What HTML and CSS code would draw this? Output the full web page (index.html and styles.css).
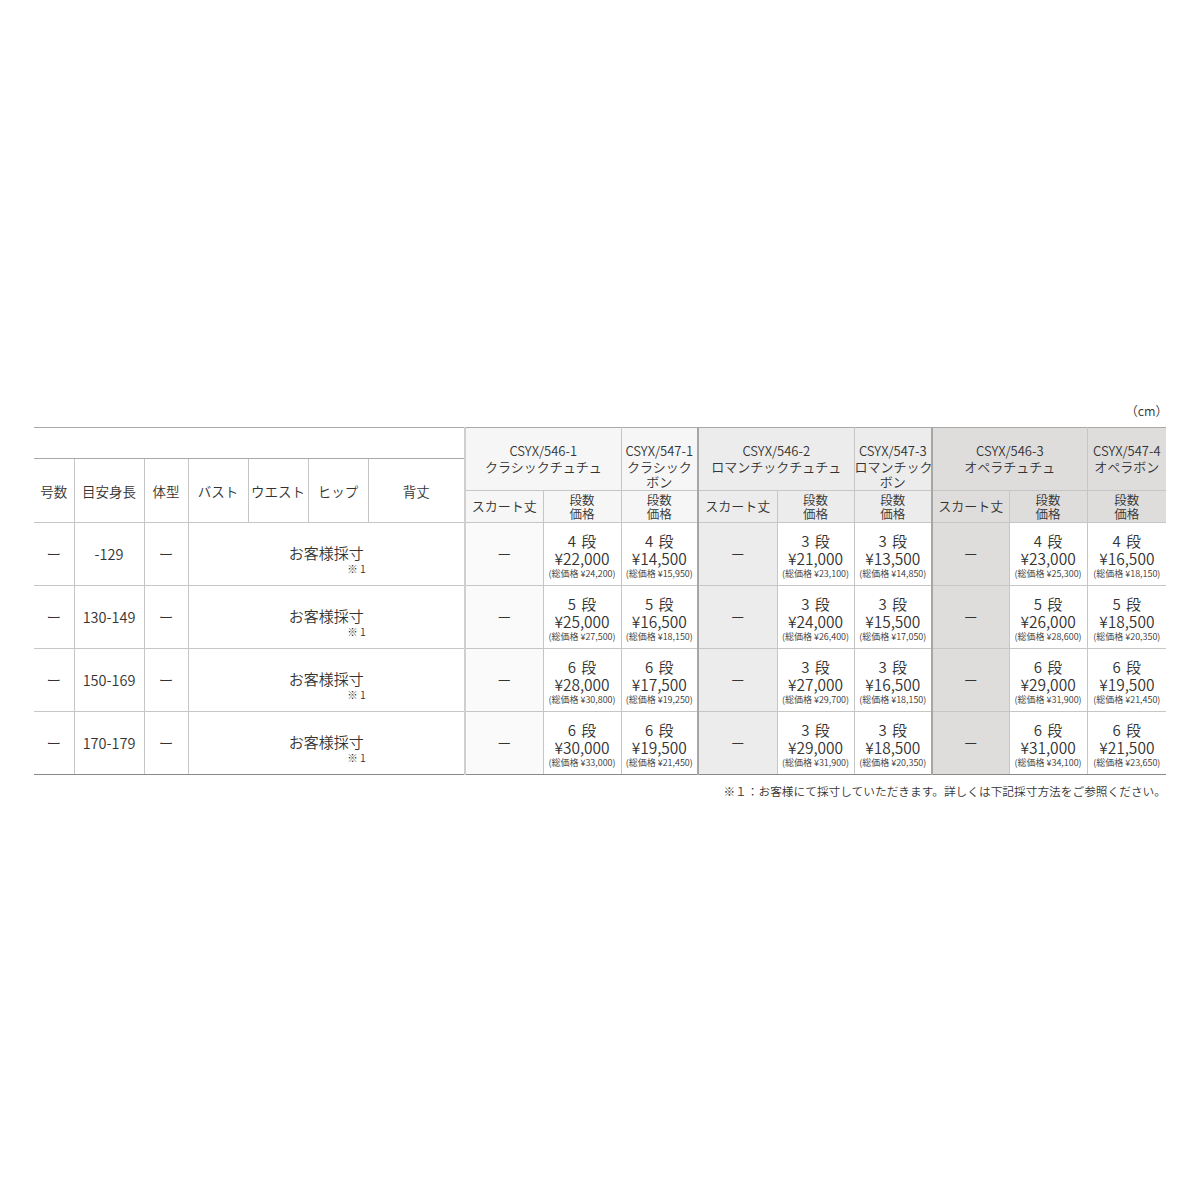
FILE: index.html
```html
<!DOCTYPE html>
<html lang="ja">
<head>
<meta charset="utf-8">
<link rel="stylesheet" href="styles.css">
</head>
<body>
<div class="page">
  <div class="unit">（cm）</div>
  <table class="size-table">
    <colgroup>
      <col class="w40"><col class="w70"><col class="w44"><col class="w60"><col class="w60"><col class="w60"><col class="w97">
      <col class="w78"><col class="w78"><col class="w77">
      <col class="w79"><col class="w77"><col class="w78">
      <col class="w77"><col class="w78"><col class="w79">
    </colgroup>
    <thead>
      <tr class="ha">
        <th colspan="7" class="blank"></th>
        <th colspan="2" rowspan="2" class="model g1 gstart">CSYX/546-1<br>クラシックチュチュ</th>
        <th rowspan="2" class="model g1">CSYX/547-1<br>クラシック<br>ボン</th>
        <th colspan="2" rowspan="2" class="model g2 gsep">CSYX/546-2<br>ロマンチックチュチュ</th>
        <th rowspan="2" class="model g2">CSYX/547-3<br>ロマンチック<br>ボン</th>
        <th colspan="2" rowspan="2" class="model g3 gsep">CSYX/546-3<br>オペラチュチュ</th>
        <th rowspan="2" class="model g3">CSYX/547-4<br>オペラボン</th>
      </tr>
      <tr class="hb">
        <th rowspan="2" class="lh">号数</th>
        <th rowspan="2" class="lh">目安身長</th>
        <th rowspan="2" class="lh">体型</th>
        <th rowspan="2" class="lh">バスト</th>
        <th rowspan="2" class="lh">ウエスト</th>
        <th rowspan="2" class="lh">ヒップ</th>
        <th rowspan="2" class="lh">背丈</th>
      </tr>
      <tr class="hc">
        <th class="sub g1 gstart">スカート丈</th>
        <th class="sub g1 two">段数<br>価格</th>
        <th class="sub g1 two">段数<br>価格</th>
        <th class="sub g2 gsep">スカート丈</th>
        <th class="sub g2 two">段数<br>価格</th>
        <th class="sub g2 two">段数<br>価格</th>
        <th class="sub g3 gsep">スカート丈</th>
        <th class="sub g3 two">段数<br>価格</th>
        <th class="sub g3 two">段数<br>価格</th>
      </tr>
    </thead>
    <tbody>
      <tr>
        <td class="lc">ー</td><td class="lc">-129</td><td class="lc">ー</td>
        <td colspan="4" class="measure"><span class="m"><span class="m1">お客様採寸</span><span class="m2">※ 1</span></span></td>
        <td class="skirt g1b gstart">ー</td>
        <td class="price"><span class="tier">4 段</span><span class="yen">¥22,000</span><span class="tot">(総価格 ¥24,200)</span></td>
        <td class="price"><span class="tier">4 段</span><span class="yen">¥14,500</span><span class="tot">(総価格 ¥15,950)</span></td>
        <td class="skirt g2 gsep">ー</td>
        <td class="price"><span class="tier">3 段</span><span class="yen">¥21,000</span><span class="tot">(総価格 ¥23,100)</span></td>
        <td class="price"><span class="tier">3 段</span><span class="yen">¥13,500</span><span class="tot">(総価格 ¥14,850)</span></td>
        <td class="skirt g3 gsep">ー</td>
        <td class="price"><span class="tier">4 段</span><span class="yen">¥23,000</span><span class="tot">(総価格 ¥25,300)</span></td>
        <td class="price"><span class="tier">4 段</span><span class="yen">¥16,500</span><span class="tot">(総価格 ¥18,150)</span></td>
      </tr>
      <tr>
        <td class="lc">ー</td><td class="lc">130-149</td><td class="lc">ー</td>
        <td colspan="4" class="measure"><span class="m"><span class="m1">お客様採寸</span><span class="m2">※ 1</span></span></td>
        <td class="skirt g1b gstart">ー</td>
        <td class="price"><span class="tier">5 段</span><span class="yen">¥25,000</span><span class="tot">(総価格 ¥27,500)</span></td>
        <td class="price"><span class="tier">5 段</span><span class="yen">¥16,500</span><span class="tot">(総価格 ¥18,150)</span></td>
        <td class="skirt g2 gsep">ー</td>
        <td class="price"><span class="tier">3 段</span><span class="yen">¥24,000</span><span class="tot">(総価格 ¥26,400)</span></td>
        <td class="price"><span class="tier">3 段</span><span class="yen">¥15,500</span><span class="tot">(総価格 ¥17,050)</span></td>
        <td class="skirt g3 gsep">ー</td>
        <td class="price"><span class="tier">5 段</span><span class="yen">¥26,000</span><span class="tot">(総価格 ¥28,600)</span></td>
        <td class="price"><span class="tier">5 段</span><span class="yen">¥18,500</span><span class="tot">(総価格 ¥20,350)</span></td>
      </tr>
      <tr>
        <td class="lc">ー</td><td class="lc">150-169</td><td class="lc">ー</td>
        <td colspan="4" class="measure"><span class="m"><span class="m1">お客様採寸</span><span class="m2">※ 1</span></span></td>
        <td class="skirt g1b gstart">ー</td>
        <td class="price"><span class="tier">6 段</span><span class="yen">¥28,000</span><span class="tot">(総価格 ¥30,800)</span></td>
        <td class="price"><span class="tier">6 段</span><span class="yen">¥17,500</span><span class="tot">(総価格 ¥19,250)</span></td>
        <td class="skirt g2 gsep">ー</td>
        <td class="price"><span class="tier">3 段</span><span class="yen">¥27,000</span><span class="tot">(総価格 ¥29,700)</span></td>
        <td class="price"><span class="tier">3 段</span><span class="yen">¥16,500</span><span class="tot">(総価格 ¥18,150)</span></td>
        <td class="skirt g3 gsep">ー</td>
        <td class="price"><span class="tier">6 段</span><span class="yen">¥29,000</span><span class="tot">(総価格 ¥31,900)</span></td>
        <td class="price"><span class="tier">6 段</span><span class="yen">¥19,500</span><span class="tot">(総価格 ¥21,450)</span></td>
      </tr>
      <tr class="last">
        <td class="lc">ー</td><td class="lc">170-179</td><td class="lc">ー</td>
        <td colspan="4" class="measure"><span class="m"><span class="m1">お客様採寸</span><span class="m2">※ 1</span></span></td>
        <td class="skirt g1b gstart">ー</td>
        <td class="price"><span class="tier">6 段</span><span class="yen">¥30,000</span><span class="tot">(総価格 ¥33,000)</span></td>
        <td class="price"><span class="tier">6 段</span><span class="yen">¥19,500</span><span class="tot">(総価格 ¥21,450)</span></td>
        <td class="skirt g2 gsep">ー</td>
        <td class="price"><span class="tier">3 段</span><span class="yen">¥29,000</span><span class="tot">(総価格 ¥31,900)</span></td>
        <td class="price"><span class="tier">3 段</span><span class="yen">¥18,500</span><span class="tot">(総価格 ¥20,350)</span></td>
        <td class="skirt g3 gsep">ー</td>
        <td class="price"><span class="tier">6 段</span><span class="yen">¥31,000</span><span class="tot">(総価格 ¥34,100)</span></td>
        <td class="price"><span class="tier">6 段</span><span class="yen">¥21,500</span><span class="tot">(総価格 ¥23,650)</span></td>
      </tr>
    </tbody>
  </table>
  <p class="note">※１：お客様にて採寸していただきます。詳しくは下記採寸方法をご参照ください。</p>
</div>
</body>
</html>
```
FILE: styles.css
```css
html, body {
  margin: 0;
  padding: 0;
  background: #fff;
}
body {
  font-family: "Noto Sans CJK JP", "Noto Sans", sans-serif;
  font-weight: 350;
  color: #333;
}
.page {
  width: 1132px;
  margin-left: 34px;
  padding-top: 402px;
}
.unit {
  text-align: right;
  font-size: 12.5px;
  line-height: 18px;
  height: 25px;
  margin-right: -2px;
}
.size-table {
  width: 1132px;
  table-layout: fixed;
  border-collapse: collapse;
}
.w40 { width: 40px; }
.w44 { width: 44px; }
.w60 { width: 60px; }
.w70 { width: 70px; }
.w77 { width: 77px; }
.w78 { width: 78px; }
.w79 { width: 79px; }
.w97 { width: 97px; }

.size-table th,
.size-table td {
  padding: 0;
  font-weight: 350;
  text-align: center;
  border: 1px solid #c6c6c6;
}
.size-table tr > :first-child { border-left: none; }
.size-table tr > :last-child { border-right: none; }
.size-table thead tr.ha > * { border-top: 1px solid #a8a8a8; }
.ha { height: 31px; }
.hb { height: 31px; }
.hc { height: 32px; }
.blank {
  border-bottom: 1px solid #a8a8a8 !important;
}
.model {
  font-size: 13px;
  line-height: 15.5px;
  vertical-align: top;
  padding-top: 15px !important;
  white-space: nowrap;
}
.lh {
  font-size: 13.5px;
  vertical-align: middle;
  padding-top: 2px !important;
}
.sub {
  font-size: 13px;
  line-height: 14px;
}
.two { padding-top: 1px !important; font-size: 12.5px; line-height: 13.5px; }
.g1 { background: #f6f6f6; }
.g1b { background: #fafafa; }
.g2 { background: #ececec; }
.g3 { background: #dfdddc; }
.gstart { border-left: 2px solid #cfcfcf !important; }
.gsep { border-left: 2px solid #a6a6a6 !important; }

tbody tr { height: 63px; }
tbody tr:first-child > * { border-top: 1px solid #a0a0a0; }
tbody tr.last > * { border-bottom: 1px solid #8a8a8a; }
.lc {
  font-size: 14.5px;
  vertical-align: middle;
}
.measure { vertical-align: middle; padding-top: 7px !important; }
.m {
  display: inline-flex;
  flex-direction: column;
  align-items: flex-end;
  margin-left: 0;
}
.m1 { font-size: 15px; line-height: 18px; }
.m2 { font-size: 10.5px; line-height: 13px; margin-right: -2px; }
.skirt { font-size: 14px; vertical-align: middle; }
.price {
  vertical-align: middle;
  padding-top: 5px !important;
}
.price span { display: block; white-space: nowrap; }
.tier { font-size: 15px; line-height: 17px; word-spacing: 2px; }
.yen { font-size: 15.5px; line-height: 19px; }
.tot { font-size: 9px; line-height: 12px; }
.note {
  margin: 9px 0 0;
  text-align: right;
  font-size: 11.7px;
  line-height: 14px;
}
```
